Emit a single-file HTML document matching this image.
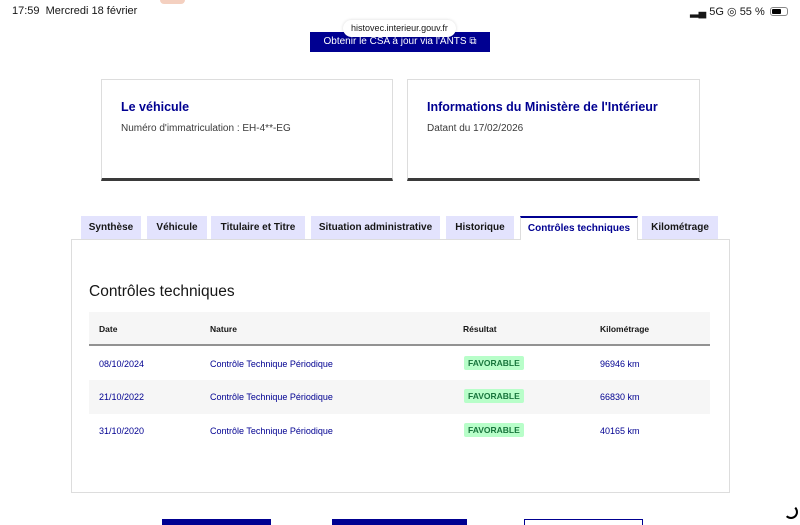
<!DOCTYPE html>
<html><head><meta charset="utf-8"><style>
*{margin:0;padding:0;box-sizing:border-box}
body{width:800px;height:525px;overflow:hidden;background:#fff;font-family:"Liberation Sans",sans-serif;position:relative;color:#161616}
.a{position:absolute}
.card{position:absolute;top:79px;height:102px;border:1px solid #ddd;border-bottom:3px solid #3a3a3a;padding:20px 19px}
.card h3{color:#000091;font-size:12.5px;font-weight:bold;margin-bottom:9px}
.card p{font-size:10px;color:#3a3a3a}
.tab{position:absolute;top:216px;height:23px;background:#e3e3fd;font-size:10px;font-weight:bold;color:#161616;text-align:center;line-height:23px}
.tab.on{background:#fff;color:#000091;border-top:2px solid #000091;border-left:1px solid #ddd;border-right:1px solid #ddd;line-height:21px;height:24px}
.row{position:absolute;left:89px;width:621px;height:34px;font-size:9px;color:#000091}
.row span{position:absolute;top:12px}
.badge{background:#b8fec9;color:#18753c;font-weight:bold;font-size:8.5px;padding:2px 4px;border-radius:2px;top:9px!important}
</style></head><body>
<div class="a" style="left:160px;top:0;width:25px;height:4px;background:#f4d0c0;border-radius:0 0 6px 6px"></div>
<div class="a" style="left:12px;top:5px;font-size:11px">17:59&nbsp;&nbsp;Mercredi 18 février</div>
<div class="a" style="left:690px;top:5px;font-size:11px;width:74px;text-align:right;white-space:nowrap">▂▄ 5G ◎ 55 %</div>
<div class="a" style="left:770px;top:7px;width:18px;height:9px;border:1px solid #888;border-radius:3px"><div style="width:9px;height:5px;margin:1px;background:#000;border-radius:1px"></div></div>
<div class="a" style="left:310px;top:32px;width:180px;height:20px;background:#000091;color:#fff;font-size:10px;text-align:center;line-height:20px">Obtenir le CSA à jour via l'ANTS ⧉</div>
<div class="a" style="left:343px;top:20px;width:113px;height:17px;background:#fff;border-radius:9px;font-size:9px;text-align:center;line-height:17px;box-shadow:0 0 3px rgba(0,0,0,.15)">histovec.interieur.gouv.fr</div>
<div class="card" style="left:101px;width:292px"><h3>Le véhicule</h3><p>Numéro d'immatriculation : EH-4**-EG</p></div>
<div class="card" style="left:407px;width:293px"><h3>Informations du Ministère de l'Intérieur</h3><p>Datant du 17/02/2026</p></div>
<div class="a" style="left:71px;top:239px;width:659px;height:254px;border:1px solid #ddd"></div>
<div class="tab" style="left:81px;width:60px">Synthèse</div>
<div class="tab" style="left:147px;width:60px">Véhicule</div>
<div class="tab" style="left:211px;width:94px">Titulaire et Titre</div>
<div class="tab" style="left:311px;width:129px">Situation administrative</div>
<div class="tab" style="left:446px;width:68px">Historique</div>
<div class="tab on" style="left:520px;width:118px">Contrôles techniques</div>
<div class="tab" style="left:642px;width:76px">Kilométrage</div>
<div class="a" style="left:89px;top:283px;font-size:15.5px">Contrôles techniques</div>
<div class="row" style="top:312px;background:#f6f6f6;border-bottom:2px solid #929292;color:#161616;font-weight:bold;font-size:8.5px"><span style="left:10px">Date</span><span style="left:121px">Nature</span><span style="left:374px">Résultat</span><span style="left:511px">Kilométrage</span></div>
<div class="row" style="top:347px"><span style="left:10px">08/10/2024</span><span style="left:121px">Contrôle Technique Périodique</span><span class="badge" style="left:375px">FAVORABLE</span><span style="left:511px">96946 km</span></div>
<div class="row" style="top:380px;background:#f6f6f6"><span style="left:10px">21/10/2022</span><span style="left:121px">Contrôle Technique Périodique</span><span class="badge" style="left:375px">FAVORABLE</span><span style="left:511px">66830 km</span></div>
<div class="row" style="top:414px"><span style="left:10px">31/10/2020</span><span style="left:121px">Contrôle Technique Périodique</span><span class="badge" style="left:375px">FAVORABLE</span><span style="left:511px">40165 km</span></div>
<div class="a" style="left:162px;top:519px;width:109px;height:6px;background:#000091"></div>
<div class="a" style="left:332px;top:519px;width:135px;height:6px;background:#000091"></div>
<div class="a" style="left:524px;top:519px;width:119px;height:6px;border:1px solid #000091;border-bottom:none"></div>
<div class="a" style="left:784px;top:505px;width:14px;height:14px;border:2px solid transparent;border-bottom-color:#000;border-right-color:#000;border-radius:50%"></div>
</body></html>
